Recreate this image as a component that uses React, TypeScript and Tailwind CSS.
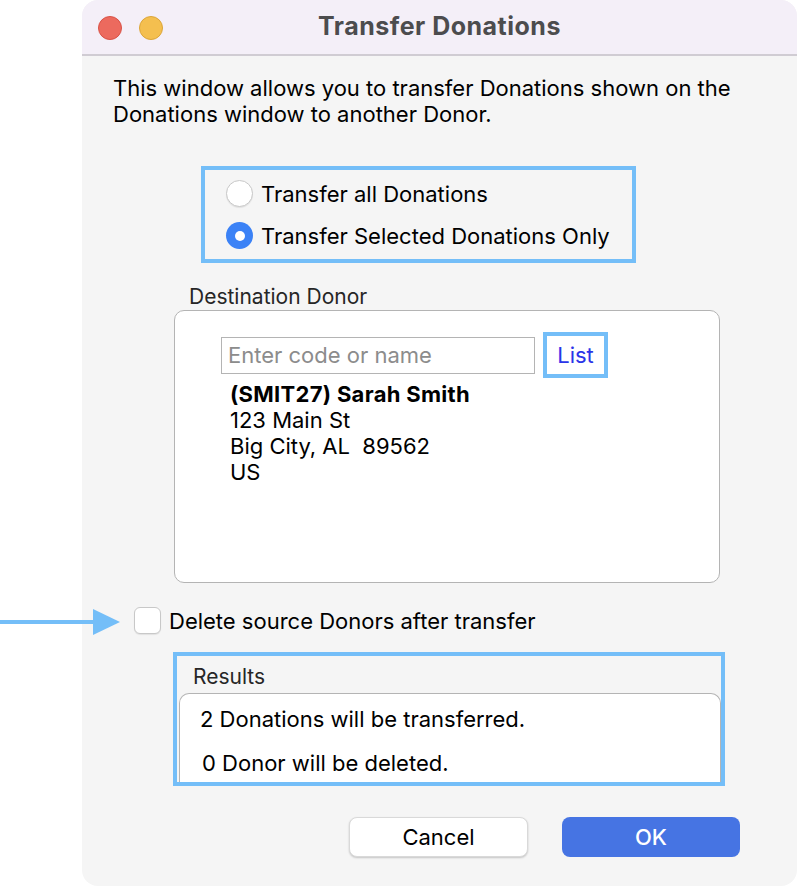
import React from "react";

export default function App() {
  const font = { fontFamily: "Inter, 'Noto Sans', 'Liberation Sans', sans-serif" };
  return (
    <div className="relative w-[798px] h-[888px] bg-white" style={font}>
      {/* arrow pointing to checkbox */}
      <svg className="absolute left-0 top-[608px]" width="122" height="30" viewBox="0 0 122 30">
        <rect x="0" y="12" width="96" height="4" fill="#74bef8" />
        <polygon points="93,1 120,14 93,27" fill="#74bef8" />
      </svg>

      <div className="flex pl-[82px]">
        <div className="w-[715px] h-[886px] rounded-[16px] bg-[#f5f5f5] overflow-hidden flex flex-col">
          {/* title bar */}
          <div className="relative h-[56px] bg-[#f4eff8] border-b-[2px] border-[#d0ccd3] flex items-center justify-center">
            <div className="absolute left-[16px] top-[16px] flex gap-[17px]">
              <div className="w-[24px] h-[24px] rounded-full bg-[#ec6a5e] border border-[#d85247]" />
              <div className="w-[24px] h-[24px] rounded-full bg-[#f4bf4f] border border-[#dba53a]" />
            </div>
            <div className="text-[25px] font-bold text-[#4c4c4e] tracking-[0.5px] -mt-[1px]">Transfer Donations</div>
          </div>

          {/* description */}
          <div className="pl-[31px] pt-[19px] text-[22px] leading-[26px] text-black">
            This window allows you to transfer Donations shown on the
            <br />
            Donations window to another Donor.
          </div>

          {/* radio group */}
          <div className="ml-[119px] mt-[39px] w-[435px] h-[97px] border-[4px] border-[#74bef8] flex flex-col justify-center gap-[15px] pl-[21px]">
            <div className="flex items-center gap-[8px]">
              <div className="w-[27px] h-[27px] rounded-full bg-white border border-[#c8c8c8] shadow-[0_1px_1px_rgba(0,0,0,0.08)]" />
              <span className="text-[22px] leading-[26px] text-black">Transfer all Donations</span>
            </div>
            <div className="flex items-center gap-[8px]">
              <div className="w-[27px] h-[27px] rounded-full bg-[#3b82f6] flex items-center justify-center">
                <div className="w-[10px] h-[10px] rounded-full bg-white" />
              </div>
              <span className="text-[22px] leading-[26px] text-black">Transfer Selected Donations Only</span>
            </div>
          </div>

          {/* destination donor */}
          <div className="ml-[107px] mt-[21px] text-[21px] leading-[26px] text-[#262626]">Destination Donor</div>
          <div className="ml-[92px] mt-[0px] w-[546px] h-[273px] rounded-[10px] border border-[#b4b4b4] bg-white pl-[46px] pt-[21px]">
            <div className="flex items-center gap-[8px]">
              <div className="w-[314px] h-[37px] border border-[#b4b4b4] bg-white flex items-center pl-[6px] text-[22px] text-[#8c8c8c]">
                Enter code or name
              </div>
              <div className="w-[65px] h-[46px] border-[4px] border-[#74bef8] flex items-center justify-center text-[22px] text-[#2b34e8]">
                List
              </div>
            </div>
            <div className="pl-[9px] mt-[3px] text-[22px] leading-[26px] text-black">
              <div className="font-bold tracking-[0.3px]">(SMIT27) Sarah Smith</div>
              <div>123 Main St</div>
              <div>Big City, AL&nbsp;&nbsp;89562</div>
              <div>US</div>
            </div>
          </div>

          {/* checkbox */}
          <div className="ml-[52px] mt-[24px] flex items-center gap-[8px]">
            <div className="w-[27px] h-[27px] rounded-[6px] bg-white border border-[#c8c8c8] shadow-[0_1px_1px_rgba(0,0,0,0.08)]" />
            <span className="text-[22px] leading-[26px] text-black">Delete source Donors after transfer</span>
          </div>

          {/* results */}
          <div className="ml-[91px] mt-[18px] w-[552px] h-[134px] border-[4px] border-[#74bef8] flex flex-col">
            <div className="pl-[16px] pt-[8px] text-[21px] leading-[26px] text-[#262626]">Results</div>
            <div className="ml-[2px] mt-[3px] flex-1 rounded-t-[10px] border-t border-x border-[#b4b4b4] bg-white pl-[20px] pt-[12px] text-[22px] leading-[26px] text-black">
              <div>2 Donations will be transferred.</div>
              <div className="mt-[18px] pl-[2px]">0 Donor will be deleted.</div>
            </div>
          </div>

          {/* buttons */}
          <div className="mt-[31px] flex gap-[34px] pl-[267px]">
            <button className="w-[179px] h-[40px] rounded-[8px] bg-white border border-[#d9d9d9] shadow-[0_1px_2px_rgba(0,0,0,0.2)] text-[22px] text-black">
              Cancel
            </button>
            <button className="w-[178px] h-[40px] rounded-[8px] bg-[#4674e3] text-[22px] font-medium text-white">
              OK
            </button>
          </div>
        </div>
      </div>
    </div>
  );
}
